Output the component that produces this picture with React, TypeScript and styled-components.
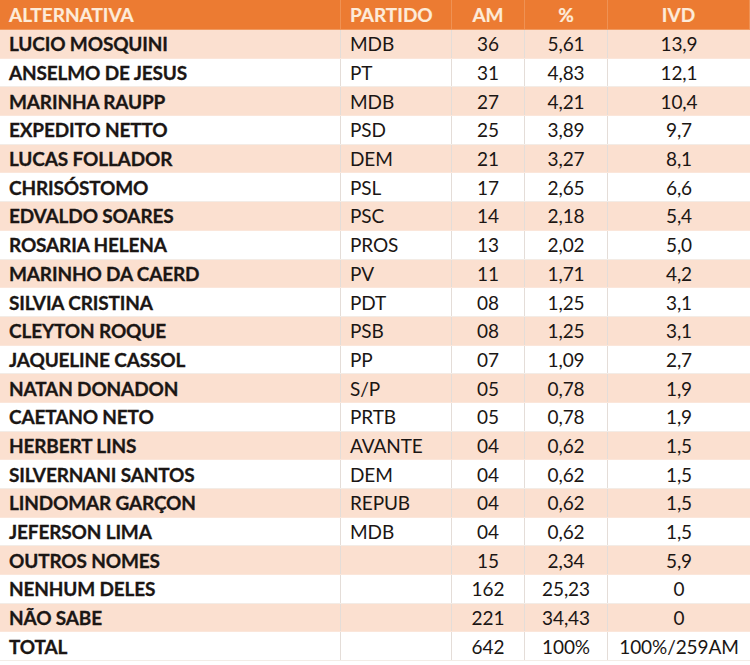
import React from 'react';
import styled, { createGlobalStyle } from 'styled-components';

const GlobalStyle = createGlobalStyle`
  body {
    margin: 0;
    background: #ffffff;
    font-family: Lato, "Liberation Sans", sans-serif;
  }
`;

interface Entry {
  name: string;
  party: string;
  am: string;
  pct: string;
  ivd: string;
}

const rows: Entry[] = [
  { name: 'LUCIO MOSQUINI', party: 'MDB', am: '36', pct: '5,61', ivd: '13,9' },
  { name: 'ANSELMO DE JESUS', party: 'PT', am: '31', pct: '4,83', ivd: '12,1' },
  { name: 'MARINHA RAUPP', party: 'MDB', am: '27', pct: '4,21', ivd: '10,4' },
  { name: 'EXPEDITO NETTO', party: 'PSD', am: '25', pct: '3,89', ivd: '9,7' },
  { name: 'LUCAS FOLLADOR', party: 'DEM', am: '21', pct: '3,27', ivd: '8,1' },
  { name: 'CHRISÓSTOMO', party: 'PSL', am: '17', pct: '2,65', ivd: '6,6' },
  { name: 'EDVALDO SOARES', party: 'PSC', am: '14', pct: '2,18', ivd: '5,4' },
  { name: 'ROSARIA HELENA', party: 'PROS', am: '13', pct: '2,02', ivd: '5,0' },
  { name: 'MARINHO DA CAERD', party: 'PV', am: '11', pct: '1,71', ivd: '4,2' },
  { name: 'SILVIA CRISTINA', party: 'PDT', am: '08', pct: '1,25', ivd: '3,1' },
  { name: 'CLEYTON ROQUE', party: 'PSB', am: '08', pct: '1,25', ivd: '3,1' },
  { name: 'JAQUELINE CASSOL', party: 'PP', am: '07', pct: '1,09', ivd: '2,7' },
  { name: 'NATAN DONADON', party: 'S/P', am: '05', pct: '0,78', ivd: '1,9' },
  { name: 'CAETANO NETO', party: 'PRTB', am: '05', pct: '0,78', ivd: '1,9' },
  { name: 'HERBERT LINS', party: 'AVANTE', am: '04', pct: '0,62', ivd: '1,5' },
  { name: 'SILVERNANI SANTOS', party: 'DEM', am: '04', pct: '0,62', ivd: '1,5' },
  { name: 'LINDOMAR GARÇON', party: 'REPUB', am: '04', pct: '0,62', ivd: '1,5' },
  { name: 'JEFERSON LIMA', party: 'MDB', am: '04', pct: '0,62', ivd: '1,5' },
  { name: 'OUTROS NOMES', party: '', am: '15', pct: '2,34', ivd: '5,9' },
  { name: 'NENHUM DELES', party: '', am: '162', pct: '25,23', ivd: '0' },
  { name: 'NÃO SABE', party: '', am: '221', pct: '34,43', ivd: '0' },
  { name: 'TOTAL', party: '', am: '642', pct: '100%', ivd: '100%/259AM' },
];

const Table = styled.div`
  width: 750px;
  height: 665px;
  background: #ffffff;
  display: flex;
  flex-direction: column;
`;

const Row = styled.div<{ $shaded?: boolean }>`
  display: grid;
  grid-template-columns: 341px 111px 73px 83px 1fr;
  height: 28.7px;
  background: ${(p) => (p.$shaded ? '#fbe0d0' : '#ffffff')};
  border-bottom: 1px solid ${(p) => (p.$shaded ? '#fbe6da' : '#f3ece6')};
  box-sizing: border-box;
`;

const HeaderRow = styled(Row)`
  height: 30px;
  background: #ec7b32;
  border-bottom: 1px solid #f09a60;
`;

const Cell = styled.div<{ $center?: boolean; $bold?: boolean; $last?: boolean }>`
  display: flex;
  align-items: center;
  justify-content: ${(p) => (p.$center ? 'center' : 'flex-start')};
  padding-left: ${(p) => (p.$center ? '0' : '9px')};
  border-right: ${(p) => (p.$last ? 'none' : '1px solid #e4ddd8')};
  font-size: 19px;
  font-weight: ${(p) => (p.$bold ? 700 : 400)};
  color: #1b1614;
  white-space: nowrap;
  letter-spacing: ${(p) => (p.$bold ? '-0.15px' : '-0.1px')};
  -webkit-text-stroke: ${(p) => (p.$bold ? '0.3px #1b1614' : '0')};
`;

const HeadCell = styled(Cell)`
  color: #fdebd9;
  font-weight: 700;
  letter-spacing: 0;
  -webkit-text-stroke: 0.2px #fdebd9;
  border-right: 1px solid #ef9254;
`;

const App = () => {
  return (
    <>
      <GlobalStyle />
      <Table>
        <HeaderRow>
          <HeadCell>ALTERNATIVA</HeadCell>
          <HeadCell>PARTIDO</HeadCell>
          <HeadCell $center>AM</HeadCell>
          <HeadCell $center>%</HeadCell>
          <HeadCell $center $last>
            IVD
          </HeadCell>
        </HeaderRow>
        {rows.map((r, i) => (
          <Row key={r.name} $shaded={i % 2 === 0}>
            <Cell $bold>{r.name}</Cell>
            <Cell>{r.party}</Cell>
            <Cell $center>{r.am}</Cell>
            <Cell $center>{r.pct}</Cell>
            <Cell $center $last>
              {r.ivd}
            </Cell>
          </Row>
        ))}
      </Table>
    </>
  );
};

export default App;
